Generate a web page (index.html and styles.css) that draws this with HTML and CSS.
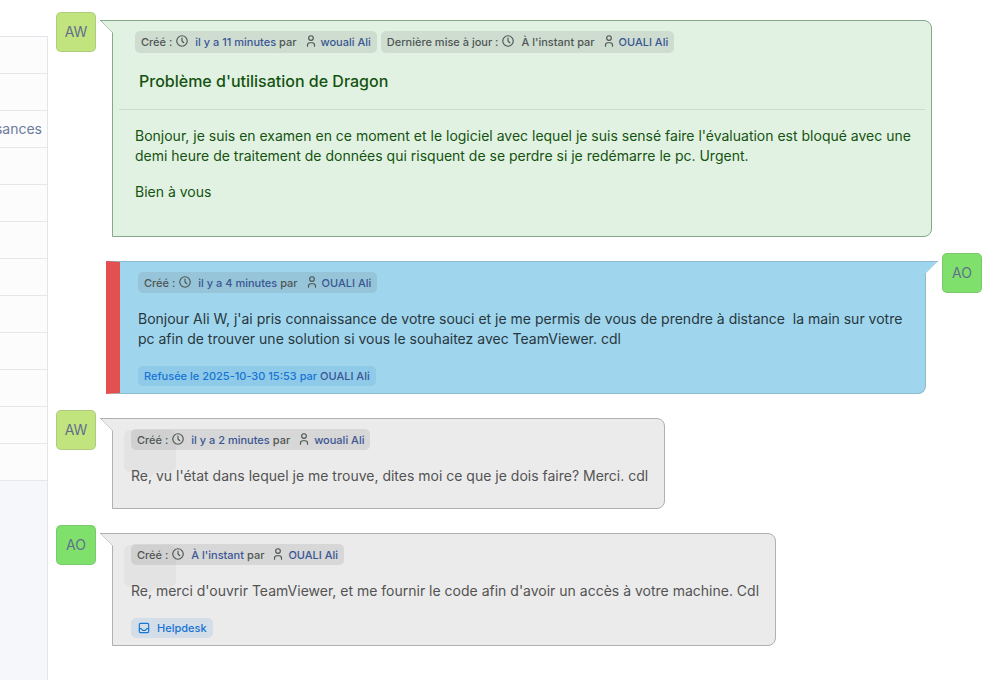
FILE: index.html
```html
<!DOCTYPE html>
<html lang="fr">
<head>
<meta charset="utf-8">
<title>Problème d'utilisation de Dragon</title>
<link rel="stylesheet" href="styles.css">
</head>
<body>
<svg class="sprite" aria-hidden="true">
  <symbol id="clock" viewBox="0 0 24 24"><circle cx="12" cy="12" r="9"/><path d="M12 7v5l3 3"/></symbol>
  <symbol id="user" viewBox="0 0 24 24"><circle cx="12" cy="7" r="4"/><path d="M6 21v-2a4 4 0 0 1 4-4h4a4 4 0 0 1 4 4v2"/></symbol>
  <symbol id="inbox" viewBox="0 0 24 24"><rect x="4" y="4" width="16" height="16" rx="2"/><path d="M4 13h3l3 3h4l3-3h3"/></symbol>
</svg>
<div class="layout">
  <nav class="tabs">
    <a href="#"></a><a href="#"></a><a href="#">connaissances</a><a href="#"></a><a href="#"></a><a href="#"></a>
    <a href="#"></a><a href="#"></a><a href="#"></a><a href="#"></a><a href="#"></a><a href="#"></a>
  </nav>
  <main class="timeline">
    <article class="item">
      <span class="avatar aw">AW</span>
      <div class="bubble green wide">
        <svg class="arrow" viewBox="0 0 13 13"><path class="fill" d="M0 0H13V13Z"/><path class="edge" d="M0 .5H13"/><path class="slant" d="M.5 .5L12.5 12.5"/></svg>
        <header class="meta">
          <span class="badge"><span>Créé :</span><svg class="icon clock"><use href="#clock"/></svg><a href="#">il y a 11 minutes</a><span class="by">par</span><svg class="icon user"><use href="#user"/></svg><a href="#">wouali Ali</a></span>
          <span class="badge"><span>Dernière mise à jour :</span><svg class="icon clock"><use href="#clock"/></svg><span>À l'instant</span><span class="by">par</span><svg class="icon user"><use href="#user"/></svg><a href="#">OUALI Ali</a></span>
        </header>
        <h1>Problème d'utilisation de Dragon</h1>
        <div class="text">
          <p>Bonjour, je suis en examen en ce moment et le logiciel avec lequel je suis sensé faire l'évaluation est bloqué avec une demi heure de traitement de données qui risquent de se perdre si je redémarre le pc. Urgent.</p>
          <p>Bien à vous</p>
        </div>
      </div>
    </article>
    <article class="item right">
      <div class="bubble blue wide">
        <svg class="arrow" viewBox="0 0 13 13"><path class="fill" d="M0 0H13V13Z"/><path class="edge" d="M0 .5H13"/><path class="slant" d="M.5 .5L12.5 12.5"/></svg>
        <header class="meta">
          <span class="badge"><span>Créé :</span><svg class="icon clock"><use href="#clock"/></svg><a href="#">il y a 4 minutes</a><span class="by">par</span><svg class="icon user"><use href="#user"/></svg><a href="#">OUALI Ali</a></span>
        </header>
        <div class="text"><p>Bonjour Ali W, j'ai pris connaissance de votre souci et je me permis de vous de prendre à distance&nbsp; la main sur votre pc afin de trouver une solution si vous le souhaitez avec TeamViewer. cdl</p></div>
        <footer><span class="badge info"><span>Refusée le 2025-10-30 15:53 par</span><a class="by" href="#">OUALI Ali</a></span></footer>
      </div>
      <span class="avatar ao">AO</span>
    </article>
    <article class="item">
      <span class="avatar aw">AW</span>
      <div class="bubble grey">
        <svg class="arrow" viewBox="0 0 13 13"><path class="fill" d="M0 0H13V13Z"/><path class="edge" d="M0 .5H13"/><path class="slant" d="M.5 .5L12.5 12.5"/></svg>
        <svg class="ghost" viewBox="0 0 52 54"><path d="M6 0H46A6 6 0 0 1 52 6V36A6 6 0 0 1 46 42H32L26 48L20 42H6A6 6 0 0 1 0 36V6A6 6 0 0 1 6 0Z"/></svg>
        <header class="meta">
          <span class="badge"><span>Créé :</span><svg class="icon clock"><use href="#clock"/></svg><a href="#">il y a 2 minutes</a><span class="by">par</span><svg class="icon user"><use href="#user"/></svg><a href="#">wouali Ali</a></span>
        </header>
        <div class="text"><p>Re, vu l'état dans lequel je me trouve, dites moi ce que je dois faire? Merci. cdl</p></div>
      </div>
    </article>
    <article class="item">
      <span class="avatar ao">AO</span>
      <div class="bubble grey">
        <svg class="arrow" viewBox="0 0 13 13"><path class="fill" d="M0 0H13V13Z"/><path class="edge" d="M0 .5H13"/><path class="slant" d="M.5 .5L12.5 12.5"/></svg>
        <svg class="ghost" viewBox="0 0 52 54"><path d="M6 0H46A6 6 0 0 1 52 6V36A6 6 0 0 1 46 42H32L26 48L20 42H6A6 6 0 0 1 0 36V6A6 6 0 0 1 6 0Z"/></svg>
        <header class="meta">
          <span class="badge"><span>Créé :</span><svg class="icon clock"><use href="#clock"/></svg><a href="#">À l'instant</a><span class="by">par</span><svg class="icon user"><use href="#user"/></svg><a href="#">OUALI Ali</a></span>
        </header>
        <div class="text"><p>Re, merci d'ouvrir TeamViewer, et me fournir le code afin d'avoir un accès à votre machine. Cdl</p></div>
        <footer><span class="badge info"><svg class="icon inbox"><use href="#inbox"/></svg><span>Helpdesk</span></span></footer>
      </div>
    </article>
  </main>
</div>
</body>
</html>
```
FILE: styles.css
```css
* { box-sizing: border-box; }
body { margin: 0; background: #fff; font: 14px/20px Inter, "Liberation Sans", sans-serif; }
a { color: inherit; text-decoration: none; }
p, h1 { margin: 0; }
.sprite { display: none; }

.layout { display: flex; min-height: 100vh; }
.tabs { flex: 0 0 48px; min-width: 0; margin-top: 36px; border: solid #e2e5e9; border-width: 1px 1px 0 0; background: #f5f7fb; overflow: hidden; }
.tabs a { display: flex; align-items: center; justify-content: flex-end; height: 37px; padding-right: 5px; border-bottom: 1px solid #e6e7e9; background: #fcfcfc; color: #6c7a9c; white-space: nowrap; }

.timeline { flex: 1; min-width: 0; padding: 12px 12px 12px 8px; display: flex; flex-direction: column; gap: 16px; }
.item { display: flex; align-items: flex-start; gap: 16px; padding-right: 50px; }
.item.right { padding: 0 0 0 50px; }
.avatar { flex: none; display: flex; align-items: center; justify-content: center; width: 40px; height: 40px; border: 1px solid rgba(98, 105, 118, .2); border-radius: 5px; color: #626f8c; }
.aw { background: #c2e47f; }
.ao { background: #80e06c; }

.bubble { position: relative; margin-top: 8px; padding: 10px 16px 6px 18px; border: 1px solid var(--line); border-radius: 0 8px 8px 0; background: var(--bg); color: var(--ink); }
.wide { flex: 1; }
.green { --bg: #e1f2e3; --line: #85a988; --ink: #155210; padding: 10px 6px 18px; }
.blue { --bg: #9fd5ed; --line: #8ab9d0; --ink: #28373e; border-left: 14px solid #e25050; border-radius: 0 0 8px 0; }
.grey { --bg: #ebebeb; --line: #b0b0b0; --ink: #535353; }

.arrow { position: absolute; top: -1px; left: -13px; width: 13px; height: 13px; }
.right .arrow { left: auto; right: -13px; transform: scaleX(-1); }
.arrow .fill { fill: var(--bg); }
.arrow .edge { stroke: var(--line); }
.arrow .slant { stroke: var(--line); opacity: .6; }
.right .slant { opacity: .2; }
.ghost { position: absolute; top: 11px; left: 11px; width: 52px; height: 54px; fill: rgba(0, 0, 0, .03); }

.meta { position: relative; display: flex; gap: 4px; }
.green .meta { padding: 0 16px; }
.badge { display: inline-flex; align-items: center; height: 21px; padding: 0 6px; border-radius: 5px; background: rgba(98, 98, 98, .15); color: #4f5654; font-size: 11px; font-weight: 500; white-space: nowrap; }
.green .badge { height: 22px; }
.badge a { color: #3a5693; }
.by { margin-left: 3px; }
.icon { flex: none; width: 14px; height: 14px; fill: none; stroke: currentColor; stroke-width: 2; stroke-linecap: round; stroke-linejoin: round; }
.clock { margin: 0 6px 2px 3px; }
.user { margin: 0 3px 2px 7px; }
.inbox { margin-right: 6px; }
.badge.info { height: 20px; background: rgba(6, 111, 209, .1); color: #1674d4; }

h1 { padding: 16px 20px; border-bottom: 1px solid #cbdccd; font-size: 16px; line-height: 24px; font-weight: 500; }
.text { position: relative; padding-top: 16px; }
.text p { margin-bottom: 16px; }
.green .text { padding: 16px 8px 0 16px; }
footer { display: flex; padding: 1px 0; }
```
